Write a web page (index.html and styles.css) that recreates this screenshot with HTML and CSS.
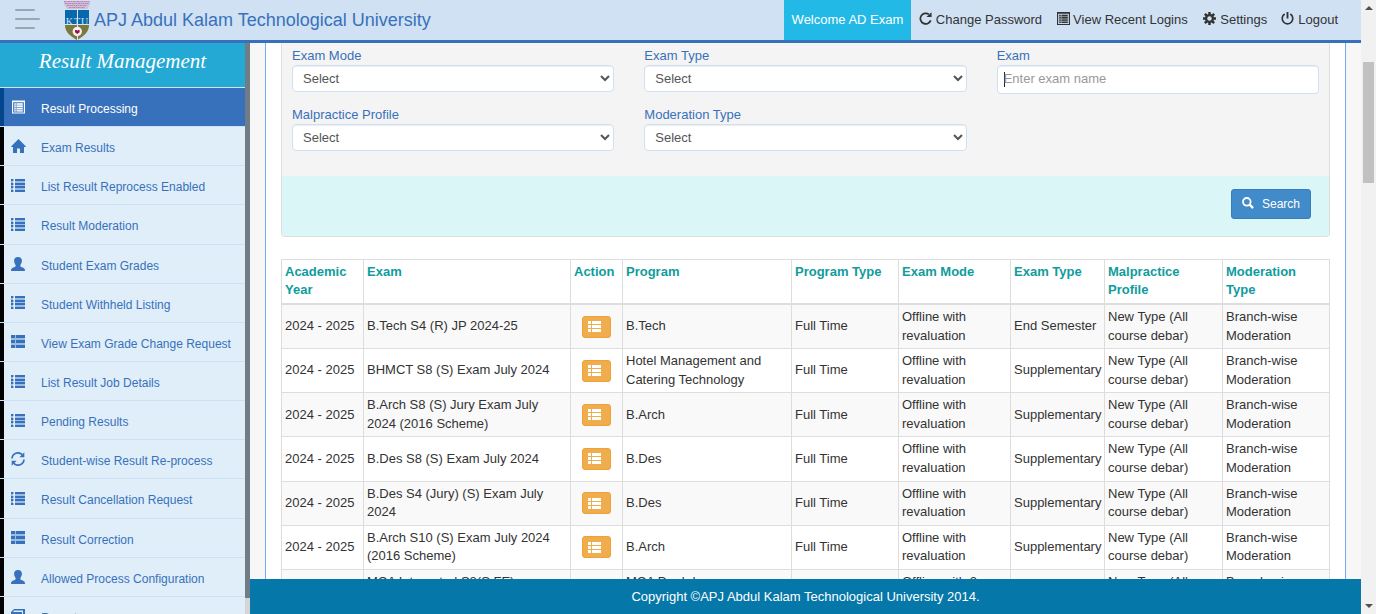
FILE: index.html
```html
<!DOCTYPE html>
<html lang="en">
<head>
<meta charset="utf-8">
<title>Result Management</title>
<link rel="stylesheet" href="styles.css">
</head>
<body>
<svg class="sprite" aria-hidden="true">
  <symbol id="list" viewBox="0 0 14 13"><path d="M0 0h2v2H0zM0 4h2v2H0zM0 7h2v2H0zM0 11h2v2H0zM4 0h10v2H4zM4 4h10v2H4zM4 7h10v2H4zM4 11h10v2H4z"/><path opacity=".4" d="M0 2h2v2H0zM0 6h2v1H0zM0 9h2v2H0zM2 0h1v2H2zM2 4h1v2H2zM2 7h1v2H2zM2 11h1v2H2zM4 2h10v2H4zM4 6h10v1H4zM4 9h10v2H4z"/></symbol>
  <symbol id="thlist" viewBox="0 0 14 13"><path d="M0 0h4v3H0zM5 0h9v3H5zM0 5h4v3H0zM5 5h9v3H5zM0 10h4v3H0zM5 10h9v3H5z"/><path opacity=".4" d="M0 3h14v2H0zM0 8h14v2H0zM4 0h1v3H4zM4 5h1v3H4zM4 10h1v3H4z"/></symbol>
  <symbol id="rows" viewBox="0 0 13 11"><path d="M0 0h3v3H0zM4 0h9v3H4zM0 4h3v3H0zM4 4h9v3H4zM0 8h3v3H0zM4 8h9v3H4z"/></symbol>
  <symbol id="table" viewBox="0 0 14 14"><path d="M0 0h14v14H0zM1.200 2v10.800h11.600V2z" fill-rule="evenodd"/><path d="M2.500 3H4v1.500H2.500zM5 3h6.500v1.500H5zM2.500 5.500H4V7H2.500zM5 5.500h6.500V7H5zM2.500 8H4v1.500H2.500zM5 8h6.500v1.500H5zM2.500 10.500H4v1.300H2.500zM5 10.500h6.500v1.300H5z"/><path opacity=".35" d="M2 3h10v9H2z"/></symbol>
  <symbol id="home" viewBox="0 0 15 14"><path d="M7.500 0 15 7.400l-.7.600H13v6H9V9.500H6V14H2V8H.7L0 7.400z"/></symbol>
  <symbol id="user" viewBox="0 0 14 14"><path d="M7 0c2.600 0 3.900 1.500 3.900 3.600 0 2-.7 3.500-1.500 4.400v1.200c0 .6 2.800 1.300 3.900 2.200.5.400.7 1.200.7 2.600H0c0-1.400.2-2.200.7-2.600 1.100-.9 3.900-1.600 3.900-2.200V8c-.8-.9-1.500-2.400-1.500-4.400C3.100 1.500 4.400 0 7 0z"/></symbol>
  <symbol id="refresh" viewBox="0 0 14 14"><path d="M1 6.500A6 6 0 0 1 11.200 2.600M13 7.500A6 6 0 0 1 2.800 11.400" fill="none" stroke="currentColor" stroke-width="1.700"/><path d="M13.300.3v5H8.400zM.7 13.700v-5h4.900z"/></symbol>
  <symbol id="repeat" viewBox="0 0 14 14"><path d="M10.600 2.500A5.700 5.700 0 1 0 12.600 9" fill="none" stroke="currentColor" stroke-width="1.900"/><path d="M13.500.2v5.300H8z"/></symbol>
  <symbol id="cog" viewBox="0 0 14 14"><path fill="none" stroke="currentColor" stroke-width="2.700" d="M7 0v3M7 11v3M0 7h3M11 7h3M2 2l2.200 2.200M9.800 9.800 12 12M12 2 9.800 4.200M4.200 9.800 2 12"/><circle cx="7" cy="7" r="3.700" fill="none" stroke="currentColor" stroke-width="2.500"/></symbol>
  <symbol id="off" viewBox="0 0 14 14"><path d="M4 2.200a5.700 5.700 0 1 0 6 0" fill="none" stroke="currentColor" stroke-width="1.800"/><path d="M6 0h2v7H6z"/></symbol>
  <symbol id="search" viewBox="0 0 13 13"><circle cx="5.200" cy="5.200" r="4.100" fill="none" stroke="currentColor" stroke-width="2"/><path d="m8 8 4 4" stroke="currentColor" stroke-width="2.500"/></symbol>
  <symbol id="book" viewBox="0 0 14 14"><path d="M3 0h11v10l-2 2V1.500H3L2 3h9v11H0V3z"/></symbol>
</svg>
<div class="window">
  <header class="topbar">
    <div class="burger"><i></i><i></i><i></i></div>
    <svg class="logo" viewBox="0 0 26 40">
      <path d="M0 1h26v3l-3 5H3L0 4z" fill="#cfa9c8" opacity=".6"/>
      <g fill="none" stroke="#b06f9f" stroke-opacity=".75" stroke-dasharray="2 .7 1 .6"><path d="M0 1.500h26"/><path d="M1 3.500h24"/><path d="M3 5.500h20"/><path d="M5 7.500h16"/></g>
      <path d="M1 10h24v14H1z" fill="#0868ae"/>
      <path d="M1 25h24c0 7-5 11-12 15C6 36 1 32 1 25z" fill="#7b783c"/>
      <path d="M1 24.500h24" stroke="#dbe4ee"/>
      <text x="13.500" y="24.500" text-anchor="middle" class="logo-text">KTU</text>
      <path d="M13.500 9v31" stroke="#f3dce7"/>
      <circle cx="13.300" cy="31.500" r="4.700" fill="#f5f0ee"/>
      <path d="M11 30h1.500l.8.800.8-.8h1.500v2.200L13.300 34 11 32.200z" fill="#99114d"/>
    </svg>
    <div class="brand">APJ Abdul Kalam Technological University</div>
    <nav class="usernav">
      <span class="welcome">Welcome AD Exam</span>
      <a class="password"><svg class="n-icon"><use href="#repeat"/></svg>Change Password</a>
      <a class="logins"><svg class="n-icon"><use href="#table"/></svg>View Recent Logins</a>
      <a class="settings"><svg class="n-icon"><use href="#cog"/></svg>Settings</a>
      <a><svg class="n-icon"><use href="#off"/></svg>Logout</a>
    </nav>
  </header>
  <aside class="sidebar">
    <div class="menu">
      <h1>Result Management</h1>
      <ul>
        <li class="active"><a><svg class="icon sq"><use href="#table"/></svg>Result Processing</a></li>
        <li><a><svg class="icon home"><use href="#home"/></svg>Exam Results</a></li>
        <li><a><svg class="icon"><use href="#list"/></svg>List Result Reprocess Enabled</a></li>
        <li><a><svg class="icon"><use href="#list"/></svg>Result Moderation</a></li>
        <li><a><svg class="icon sq"><use href="#user"/></svg>Student Exam Grades</a></li>
        <li><a><svg class="icon"><use href="#list"/></svg>Student Withheld Listing</a></li>
        <li><a><svg class="icon"><use href="#thlist"/></svg>View Exam Grade Change Request</a></li>
        <li><a><svg class="icon"><use href="#list"/></svg>List Result Job Details</a></li>
        <li><a><svg class="icon"><use href="#list"/></svg>Pending Results</a></li>
        <li><a><svg class="icon sq"><use href="#refresh"/></svg>Student-wise Result Re-process</a></li>
        <li><a><svg class="icon"><use href="#list"/></svg>Result Cancellation Request</a></li>
        <li><a><svg class="icon"><use href="#thlist"/></svg>Result Correction</a></li>
        <li><a><svg class="icon sq"><use href="#user"/></svg>Allowed Process Configuration</a></li>
        <li><a><svg class="icon sq"><use href="#book"/></svg>Reports</a></li>
      </ul>
    </div>
    <div class="menu-scroll"></div>
  </aside>
  <main class="content">
    <div class="page">
      <section class="panel">
        <div class="filters">
          <label>Exam Mode<select><option>Select</option></select></label>
          <label>Exam Type<select><option>Select</option></select></label>
          <label>Exam<span class="field"><span class="caret"></span><span class="hint">Enter exam name</span></span></label>
          <label>Malpractice Profile<select><option>Select</option></select></label>
          <label>Moderation Type<select><option>Select</option></select></label>
        </div>
        <div class="actions"><button class="search"><svg><use href="#search"/></svg>Search</button></div>
      </section>
      <table>
        <colgroup><col class="c1"><col class="c2"><col class="c3"><col class="c4"><col class="c5"><col class="c6"><col class="c7"><col class="c8"><col class="c9"></colgroup>
        <thead><tr><th>Academic Year</th><th>Exam</th><th>Action</th><th>Program</th><th>Program Type</th><th>Exam Mode</th><th>Exam Type</th><th>Malpractice Profile</th><th>Moderation Type</th></tr></thead>
        <tbody>
          <tr><td>2024 - 2025</td><td>B.Tech S4 (R) JP 2024-25</td><td class="act"><button class="row-btn"><svg><use href="#rows"/></svg></button></td><td>B.Tech</td><td>Full Time</td><td>Offline with revaluation</td><td>End Semester</td><td>New Type (All course debar)</td><td>Branch-wise Moderation</td></tr>
          <tr><td>2024 - 2025</td><td>BHMCT S8 (S) Exam July 2024</td><td class="act"><button class="row-btn"><svg><use href="#rows"/></svg></button></td><td>Hotel Management and Catering Technology</td><td>Full Time</td><td>Offline with revaluation</td><td>Supplementary</td><td>New Type (All course debar)</td><td>Branch-wise Moderation</td></tr>
          <tr><td>2024 - 2025</td><td>B.Arch S8 (S) Jury Exam July 2024 (2016 Scheme)</td><td class="act"><button class="row-btn"><svg><use href="#rows"/></svg></button></td><td>B.Arch</td><td>Full Time</td><td>Offline with revaluation</td><td>Supplementary</td><td>New Type (All course debar)</td><td>Branch-wise Moderation</td></tr>
          <tr><td>2024 - 2025</td><td>B.Des S8 (S) Exam July 2024</td><td class="act"><button class="row-btn"><svg><use href="#rows"/></svg></button></td><td>B.Des</td><td>Full Time</td><td>Offline with revaluation</td><td>Supplementary</td><td>New Type (All course debar)</td><td>Branch-wise Moderation</td></tr>
          <tr><td>2024 - 2025</td><td>B.Des S4 (Jury) (S) Exam July 2024</td><td class="act"><button class="row-btn"><svg><use href="#rows"/></svg></button></td><td>B.Des</td><td>Full Time</td><td>Offline with revaluation</td><td>Supplementary</td><td>New Type (All course debar)</td><td>Branch-wise Moderation</td></tr>
          <tr><td>2024 - 2025</td><td>B.Arch S10 (S) Exam July 2024 (2016 Scheme)</td><td class="act"><button class="row-btn"><svg><use href="#rows"/></svg></button></td><td>B.Arch</td><td>Full Time</td><td>Offline with revaluation</td><td>Supplementary</td><td>New Type (All course debar)</td><td>Branch-wise Moderation</td></tr>
          <tr><td>2024 - 2025</td><td>MCA Integrated S8(S,FE)<br>Exam July 2024</td><td class="act"><button class="row-btn"><svg><use href="#rows"/></svg></button></td><td>MCA Dual degree (Integrated)</td><td>Full Time</td><td>Offline with 2 revaluation</td><td>Supplementary</td><td>New Type (All course debar)</td><td>Branch-wise Moderation</td></tr>
        </tbody>
      </table>
    </div>
  </main>
  <footer>Copyright ©APJ Abdul Kalam Technological University 2014.</footer>
  <div class="scrollbar"><i class="up"></i><i class="thumb"></i><i class="down"></i></div>
</div>
</body>
</html>
```

FILE: styles.css
```css
* { box-sizing: border-box; }
body {
  margin: 0;
  font: 13px/1.42857 "Liberation Sans", Arial, sans-serif;
  color: #333;
  overflow: hidden;
}
svg { fill: currentColor; flex: none; }
.sprite { display: none; }
.window {
  display: grid;
  width: 1376px;
  height: 614px;
  grid-template-columns: 250px 1111px 15px;
  grid-template-rows: 43px 536px 35px;
}

/* Top bar */
.topbar {
  grid-column: 1 / 3;
  display: flex;
  align-items: flex-start;
  background: #d0e1f3;
  border-bottom: 3px solid #3871bb;
}
.burger { display: flex; flex-direction: column; gap: 7px; padding: 9px 0 0 15px; width: 64px; }
.burger i { width: 20px; height: 2px; background: #93a9b8; border-radius: 1px; }
.burger i:nth-child(2) { width: 25px; }
.logo { width: 26px; height: 40px; margin-right: 4px; }
.logo-text { font: 10px "Liberation Serif", serif; letter-spacing: 1px; fill: #d6e6f2; }
.brand { font-size: 18px; line-height: 40px; color: #3871bb; white-space: nowrap; }
.usernav { margin-left: auto; display: flex; padding-right: 16px; line-height: 40px; white-space: nowrap; }
.usernav a { display: flex; align-items: center; height: 40px; padding: 0 7px; }
.usernav a + a { margin-left: 1px; }
.n-icon { width: 13px; height: 13px; margin: -3px 4px 0 1px; }
.usernav .settings { padding-right: 5px; }
.usernav .logins { padding-right: 6.5px; }
.usernav .logins .n-icon { margin: -3px 3px 0 .5px; }
.usernav .password { padding-right: 6.5px; }
.welcome { background: #22b9e6; color: #fff; padding: 0 7.5px; height: 40px; }

/* Side menu */
.sidebar { grid-row: 2 / 4; display: flex; overflow: hidden; background: #e0eef9; }
.menu { width: 245px; }
.menu h1 {
  margin: 0;
  height: 45px;
  padding-top: 3px;
  background: #23a9d4;
  border-bottom: 1px solid #cfe6f5;
  color: #fff;
  font: italic 21px/30px "Liberation Serif", serif;
  text-align: center;
}
.menu ul { list-style: none; margin: 0; padding: 0; }
.menu li { height: 39.15px; border-bottom: 1px solid #cfe0f4; }
.menu a {
  display: flex;
  align-items: center;
  height: 100%;
  padding: 5px 0 0 7px;
  border-left: 4px solid #000;
  font-size: 12px;
  color: #3871bb;
  white-space: nowrap;
}
.menu .active a { background: #3871bb; border-color: #04468c; color: #fff; }
.icon { width: 14px; height: 13px; margin: -5px 16px 0 0; }
.icon.sq { height: 14px; }
.icon.home { width: 15px; height: 14px; margin-right: 15px; }
.menu .active .icon { width: 13px; height: 14px; margin: -5px 16px 0 1px; }
.menu-scroll { width: 5px; background: linear-gradient(#707c86 555px, #d5d5d5 555px); }

/* Main area */
.content { background: #f7f7f7; overflow: hidden; padding: 0 15px; }
.page { height: 560px; background: #fff; border: solid #76acee; border-width: 0 1px; padding: 0 15px; }
.panel { border: 1px solid #ddd; border-top: 0; border-radius: 0 0 4px 4px; background: #f4f4f4; height: 194px; overflow: hidden; }
.filters { height: 133px; padding: 4px 10px 0; display: grid; grid-template-columns: repeat(3, 1fr); column-gap: 30px; grid-auto-rows: 59px; }
.filters label { color: #3871bb; display: block; line-height: 18px; }
select, .field {
  display: block;
  width: 100%;
  height: 27px;
  font: inherit;
  color: #555;
  background: #fff;
  border: 1px solid #cfe0f4;
  border-radius: 4px;
  box-shadow: inset 0 1px 1px rgba(0, 0, 0, .075);
  padding: 3px 6px;
}
.field { display: flex; height: 29px; align-items: center; padding: 2px 6px 4px; }
.caret { width: 1px; height: 15px; background: #222; margin: 2px -1px 0 0; }
.hint { color: #999; line-height: 15px; }
.actions { height: 60px; background: #dbf6f7; display: flex; justify-content: flex-end; padding: 13px 18px 0 0; }
.search {
  width: 80px;
  height: 30px;
  display: flex;
  align-items: center;
  padding: 0 10px;
  gap: 8px;
  border: 1px solid #357ebd;
  border-radius: 3px;
  background: #428bca;
  color: #fff;
  font: 12px "Liberation Sans", Arial, sans-serif;
}
.search svg { width: 12px; height: 12px; margin-top: -2px; }

/* Results */
table { width: 1049px; margin-top: 21.9px; border-collapse: collapse; table-layout: fixed; }
.c1 { width: 82px; } .c2 { width: 207px; } .c3 { width: 52px; } .c4 { width: 169px; } .c5 { width: 107px; }
.c6 { width: 112px; } .c7 { width: 94px; } .c8 { width: 118px; } .c9 { width: 107px; }
th, td { border: 1px solid #ddd; padding: 3px; text-align: left; vertical-align: middle; }
th { vertical-align: top; color: #109c9c; border-bottom-width: 2px; }
tbody tr:nth-child(odd) { background: #f9f9f9; }
td.act { text-align: center; padding: 3px 0; }
.row-btn {
  width: 29px;
  height: 22px;
  margin: 0 auto;
  display: flex;
  align-items: center;
  padding: 0 5px;
  background: #f0ad4e;
  border: 1px solid #eea236;
  border-radius: 3px;
  color: #fff;
}
.row-btn svg { width: 13px; height: 11px; }

footer { grid-column: 2; grid-row: 3; background: #0577a8; color: #fff; text-align: center; line-height: 35px; }

.scrollbar { grid-column: 3; grid-row: 1 / 4; background: #f1f1f1; display: flex; flex-direction: column; align-items: center; }
.scrollbar .up { border: 4px solid transparent; border-top: 0; border-bottom: 4px solid #505050; margin-top: 6px; }
.scrollbar .thumb { width: 11px; height: 121px; background: #c1c1c1; margin-top: 52px; }
.scrollbar .down { border: 4px solid transparent; border-bottom: 0; border-top: 4px solid #505050; margin: auto 0 6px; }
```
